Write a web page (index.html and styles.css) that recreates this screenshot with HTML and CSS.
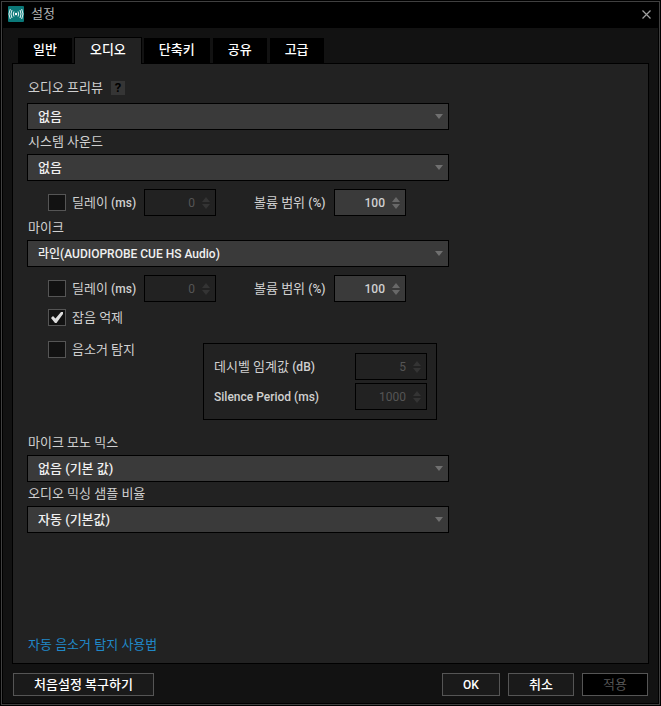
FILE: index.html
```html
<!DOCTYPE html>
<html lang="ko">
<head>
<meta charset="UTF-8" />
<title>설정</title>
<meta name="viewport" content="width=device-width,initial-scale=1" />
<link rel="stylesheet" href="styles.css">
</head>
<body>
<div class="window">
  <header class="titlebar">
    <svg class="app-icon" width="16" height="16" viewBox="0 0 16 16" aria-hidden="true">
      <rect width="16" height="16" rx="1" fill="#0b7878" />
      <circle cx="8" cy="8" r="1.2" fill="#fff" />
      <g fill="none" stroke="#e4f4f4" stroke-width="1">
        <path d="M6 5.5Q4.6 8 6 10.500M4 4Q1.900 8 4 12M2.300 3Q-.4 8 2.300 13" />
        <path d="M10 5.500Q11.400 8 10 10.500M12 4Q14.100 8 12 12M13.700 3Q16.400 8 13.700 13" />
      </g>
    </svg>
    <h1 class="title">설정</h1>
    <button class="close" type="button" aria-label="닫기">
      <svg width="9" height="9" viewBox="0 0 9 9"><path d="M.5.5l8 8M8.500.5l-8 8" stroke="#a0a0a0" stroke-width="1.200" /></svg>
    </button>
  </header>

  <main class="content">
    <nav class="tabs" role="tablist">
      <button class="tab" type="button" role="tab">일반</button>
      <button class="tab active" type="button" role="tab" aria-selected="true">오디오</button>
      <button class="tab" type="button" role="tab">단축키</button>
      <button class="tab" type="button" role="tab">공유</button>
      <button class="tab" type="button" role="tab">고급</button>
    </nav>

    <section class="panel">
      <div class="field-head">
        <label class="field-label" for="preview">오디오 프리뷰</label>
        <button class="help" type="button">?</button>
      </div>
      <div class="dropdown">
        <select id="preview"><option>없음</option></select>
        <svg class="caret" width="8" height="5" viewBox="0 0 8 5"><path d="M0 0h8L4 5z" /></svg>
      </div>

      <label class="field-label" for="system">시스템 사운드</label>
      <div class="dropdown">
        <select id="system"><option>없음</option></select>
        <svg class="caret" width="8" height="5" viewBox="0 0 8 5"><path d="M0 0h8L4 5z" /></svg>
      </div>
      <div class="options">
        <label class="check">
          <input type="checkbox" />
          <span>딜레이 <span class="unit">(ms)</span></span>
        </label>
        <div class="spinner">
          <input type="number" value="0" aria-label="시스템 사운드 딜레이" disabled />
          <svg class="arrows" width="8" height="12" viewBox="0 0 8 12"><path d="M0 5h8L4 0zM0 7h8L4 12z" /></svg>
        </div>
        <label class="volume-label" for="system-volume">볼륨 범위 <span class="unit">(%)</span></label>
        <div class="spinner">
          <input type="number" id="system-volume" value="100" />
          <svg class="arrows" width="8" height="12" viewBox="0 0 8 12"><path d="M0 5h8L4 0zM0 7h8L4 12z" /></svg>
        </div>
      </div>

      <label class="field-label" for="mic">마이크</label>
      <div class="dropdown">
        <select id="mic" class="device"><option>라인(AUDIOPROBE CUE HS Audio)</option></select>
        <svg class="caret" width="8" height="5" viewBox="0 0 8 5"><path d="M0 0h8L4 5z" /></svg>
      </div>
      <div class="options">
        <label class="check">
          <input type="checkbox" />
          <span>딜레이 <span class="unit">(ms)</span></span>
        </label>
        <div class="spinner">
          <input type="number" value="0" aria-label="마이크 딜레이" disabled />
          <svg class="arrows" width="8" height="12" viewBox="0 0 8 12"><path d="M0 5h8L4 0zM0 7h8L4 12z" /></svg>
        </div>
        <label class="volume-label" for="mic-volume">볼륨 범위 <span class="unit">(%)</span></label>
        <div class="spinner">
          <input type="number" id="mic-volume" value="100" />
          <svg class="arrows" width="8" height="12" viewBox="0 0 8 12"><path d="M0 5h8L4 0zM0 7h8L4 12z" /></svg>
        </div>
      </div>
      <div class="options noise">
        <label class="check">
          <input type="checkbox" checked />
          <svg class="tick" width="12" height="11" viewBox="0 0 12 11"><path d="M0 6l2-2 2.500 2.500L10 0h2v2L5.500 11H4z" fill="#dcdcdc" /></svg>
          <span>잡음 억제</span>
        </label>
      </div>
      <div class="options silence">
        <label class="check">
          <input type="checkbox" />
          <span>음소거 탐지</span>
        </label>
        <div class="silence-box">
          <div class="silence-row">
            <label for="threshold">데시벨 임계값 <span class="unit">(dB)</span></label>
            <div class="spinner">
              <input type="number" id="threshold" value="5" disabled />
              <svg class="arrows" width="8" height="12" viewBox="0 0 8 12"><path d="M0 5h8L4 0zM0 7h8L4 12z" /></svg>
            </div>
          </div>
          <div class="silence-row">
            <label class="unit" for="period">Silence Period (ms)</label>
            <div class="spinner">
              <input type="number" id="period" value="1000" disabled />
              <svg class="arrows" width="8" height="12" viewBox="0 0 8 12"><path d="M0 5h8L4 0zM0 7h8L4 12z" /></svg>
            </div>
          </div>
        </div>
      </div>

      <label class="field-label" for="mono">마이크 모노 믹스</label>
      <div class="dropdown">
        <select id="mono"><option>없음 (기본 값)</option></select>
        <svg class="caret" width="8" height="5" viewBox="0 0 8 5"><path d="M0 0h8L4 5z" /></svg>
      </div>
      <label class="field-label" for="rate">오디오 믹싱 샘플 비율</label>
      <div class="dropdown">
        <select id="rate"><option>자동 (기본값)</option></select>
        <svg class="caret" width="8" height="5" viewBox="0 0 8 5"><path d="M0 0h8L4 5z" /></svg>
      </div>

      <a class="guide" href="#">자동 음소거 탐지 사용법</a>
    </section>

    <footer class="actions">
      <button class="btn reset" type="button">처음설정 복구하기</button>
      <button class="btn ok" type="button">OK</button>
      <button class="btn" type="button">취소</button>
      <button class="btn apply" type="button" disabled>적용</button>
    </footer>
  </main>
</div>
</body>
</html>
```

FILE: styles.css
```css
:root {
  --bg: #121212;
  --panel: #222;
  --field: #3a3a3a;
  --line: #000;
  --text: #d0d0d0;
  --text-strong: #f0f0f0;
  --text-off: #555;
  --link: #2088c8;
}
* {
  box-sizing: border-box;
}
body {
  margin: 0;
  padding: 1px;
  min-height: 100vh;
  display: flex;
  background: #000;
  color: var(--text);
  font: 13px/18px Roboto, "Noto Sans CJK KR", sans-serif;
}
button, input, select {
  font: inherit;
  color: inherit;
  margin: 0;
  padding: 0;
  border: 0;
  border-radius: 0;
}
.window {
  flex: 1;
  display: flex;
  flex-direction: column;
  padding: 0 1px 1px;
  border: 1px solid #404040;
  background: #000;
}

/* Title bar */
.titlebar {
  display: flex;
  align-items: center;
  height: 26px;
  padding: 0 7px 2px 5px;
}
.title {
  flex: 1;
  margin: 0 0 0 7px;
  font-size: 13px;
  font-weight: 400;
  color: #b0b0b0;
}
.close {
  display: flex;
  background: none;
}

.content {
  flex: 1;
  display: flex;
  flex-direction: column;
  padding: 9px 9px 7px;
  background: var(--bg);
}

/* Tabs */
.tabs {
  display: flex;
  align-items: flex-end;
  gap: 3px;
  margin-bottom: -1px;
  padding-left: 6px;
}
.tab {
  height: 26px;
  padding: 0 15px 2px;
  background: #000;
  color: #fff;
  font-weight: 500;
}
.tab.active {
  height: 27px;
  margin: 0 -1px;
  border: 1px solid var(--line);
  border-bottom: 0;
  background: var(--panel);
  z-index: 1;
}

/* Settings panel */
.panel {
  flex: 1;
  display: flex;
  flex-direction: column;
  padding: 12px 14px 6px;
  border: 1px solid var(--line);
  background: var(--panel);
}
.field-head {
  display: flex;
  align-items: center;
  gap: 8px;
  margin-bottom: 3px;
}
.field-label {
  padding-left: 1px;
  line-height: 24px;
}
.help {
  width: 14px;
  height: 14px;
  background: #353535;
  color: #000;
  font-weight: 700;
  line-height: 14px;
}
.dropdown {
  position: relative;
  max-width: 422px;
}
.dropdown select {
  display: block;
  width: 100%;
  height: 27px;
  padding: 0 24px 0 10px;
  appearance: none;
  border: 1px solid var(--line);
  background: var(--field);
  color: var(--text-strong);
  font-weight: 500;
}
.dropdown .device {
  font-size: 12px;
}
.caret {
  position: absolute;
  top: 11px;
  right: 6px;
  fill: #707070;
  pointer-events: none;
}
.options {
  display: flex;
  align-items: center;
  margin-top: 8px;
  padding-left: 21px;
}
.unit {
  font-size: 12px;
  font-weight: 500;
}
.check {
  position: relative;
  display: flex;
  align-items: center;
  gap: 6px;
  width: 96px;
  height: 17px;
  white-space: nowrap;
}
.check input {
  width: 18px;
  height: 17px;
  appearance: none;
  border: 1px solid #555;
  background: var(--bg);
}
.tick {
  position: absolute;
  top: 3px;
  left: 3px;
  pointer-events: none;
}
.check input:not(:checked) + .tick {
  display: none;
}
.volume-label {
  width: 80px;
  margin-left: 38px;
}
.spinner {
  position: relative;
  width: 72px;
}
.spinner input {
  display: block;
  width: 100%;
  height: 27px;
  padding: 0 20px 0 4px;
  appearance: textfield;
  border: 1px solid var(--line);
  background: var(--field);
  color: var(--text);
  font-size: 12px;
  font-weight: 500;
  text-align: right;
}
.spinner input::-webkit-inner-spin-button {
  appearance: none;
  margin: 0;
}
.spinner input:disabled {
  background: var(--panel);
  color: var(--text-off);
  font-weight: 400;
}
.arrows {
  position: absolute;
  top: 8px;
  right: 6px;
  fill: #686868;
  pointer-events: none;
}
.spinner input:disabled + .arrows {
  fill: #343434;
}
.noise {
  margin-top: 7px;
}
.silence {
  align-items: flex-start;
  margin: 15px 0 11px;
}
.silence .check {
  width: 155px;
}
.silence-box {
  display: flex;
  flex-direction: column;
  gap: 3px;
  width: 234px;
  margin-top: 2px;
  padding: 9px 9px 9px 10px;
  border: 1px solid var(--line);
}
.silence-row {
  display: flex;
  align-items: center;
  justify-content: space-between;
}
.guide {
  align-self: flex-start;
  margin-top: auto;
  padding-left: 1px;
  color: var(--link);
  line-height: 24px;
  text-decoration: none;
}

/* Bottom buttons */
.actions {
  display: flex;
  gap: 8px;
  margin-top: 9px;
  padding: 0 1px;
}
.btn {
  width: 66px;
  height: 23px;
  border: 1px solid #555;
  background: #1a1a1a;
  color: #fff;
  font-weight: 500;
  line-height: 18px;
}
.reset {
  width: 141px;
  margin-right: auto;
}
.ok {
  width: 58px;
  font-size: 12px;
}
.apply {
  background: #000;
  color: var(--text-off);
  font-weight: 400;
}
```
